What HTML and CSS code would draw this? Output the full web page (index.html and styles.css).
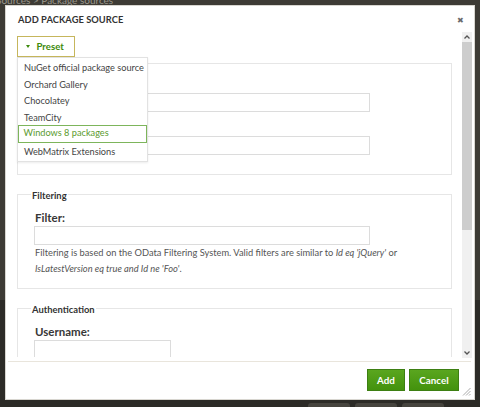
FILE: index.html
```html
<!DOCTYPE html>
<html>
<head>
<meta charset="utf-8">
<link rel="stylesheet" href="styles.css">
</head>
<body>
<div class="backdrop">
  <div class="crumb">Sources &gt; Package sources</div>
  <div class="tabs"><span class="tab"></span><span class="tab"></span><span class="tab"></span></div>
</div>

<div class="dialog">
  <div class="header">
    <span class="title">ADD PACKAGE SOURCE</span>
    <span class="close">&#10006;</span>
  </div>

  <div class="scroller">
    <div class="content">
      <div class="preset-wrap">
        <button class="preset"><span class="caret"></span>Preset</button>
        <ul class="menu">
          <li>NuGet official package source</li>
          <li>Orchard Gallery</li>
          <li>Chocolatey</li>
          <li>TeamCity</li>
          <li class="active">Windows 8 packages</li>
          <li>WebMatrix Extensions</li>
        </ul>
      </div>

      <fieldset class="fs fs-source">
        <legend>Source</legend>
        <label class="lbl">Name:</label>
        <input class="inp wide" type="text">
        <label class="lbl gap">Source:</label>
        <input class="inp wide" type="text">
      </fieldset>

      <fieldset class="fs fs-filter">
        <legend>Filtering</legend>
        <label class="lbl">Filter:</label>
        <input class="inp wide" type="text">
        <p class="help">Filtering is based on the OData Filtering System. Valid filters are similar to <i>Id eq 'jQuery'</i> or<br><i>IsLatestVersion eq true and Id ne 'Foo'</i>.</p>
      </fieldset>

      <fieldset class="fs fs-auth">
        <legend>Authentication</legend>
        <label class="lbl">Username:</label>
        <input class="inp narrow tall" type="text">
      </fieldset>
    </div>
    <div class="scrollbar">
      <div class="sb-btn"><svg width="6" height="4" viewBox="0 0 6 4"><path d="M0.5 3.5 L3 1 L5.5 3.5" fill="none" stroke="#555" stroke-width="1.3"/></svg></div>
      <div class="sb-thumb"></div>
      <div class="sb-track"></div>
      <div class="sb-btn"><svg width="6" height="4" viewBox="0 0 6 4"><path d="M0.5 0.5 L3 3 L5.5 0.5" fill="none" stroke="#555" stroke-width="1.3"/></svg></div>
    </div>
  </div>

  <div class="footer">
    <button class="btn add">Add</button>
    <button class="btn cancel">Cancel</button>
  </div>
  <svg class="grip" width="9" height="9" viewBox="0 0 9 9">
    <path d="M8.5 1 L1 8.5 M8.5 4 L4 8.5 M8.5 7 L7 8.5" stroke="#aaa" stroke-width="1"/>
  </svg>
</div>
</body>
</html>
```

FILE: styles.css
```css
* { box-sizing: border-box; }
html, body { margin: 0; padding: 0; }
body {
  width: 480px;
  height: 407px;
  overflow: hidden;
  background: #3b3933;
  font-family: Lato, "Open Sans", sans-serif;
  position: relative;
}
.backdrop {
  position: absolute;
  inset: 0;
  background: linear-gradient(to bottom, #3d3b35 0, #3d3b35 300px, #2c2b27 300px);
}
.crumb {
  position: absolute;
  left: -4px;
  top: -6px;
  font-size: 10px;
  color: #9a978c;
}
.tabs {
  position: absolute;
  left: 308px;
  top: 403px;
  display: flex;
  gap: 5px;
}
.tab {
  width: 42px;
  height: 8px;
  background: #46443e;
  border-radius: 3px 3px 0 0;
}
.dialog {
  position: absolute;
  left: 5px;
  top: 5px;
  width: 470px;
  height: 395px;
  background: #fff;
  border: 1px solid #d8d6d0;
  display: flex;
  flex-direction: column;
}
.header {
  height: 27px;
  flex: none;
  display: flex;
  align-items: center;
  justify-content: space-between;
  padding: 0 10px 0 12px;
}
.title {
  font-weight: 700;
  font-size: 9.3px;
  color: #333;
  letter-spacing: 0.05px;
}
.close {
  font-size: 8px;
  color: #6a6a6a;
  line-height: 1;
}
.scroller {
  display: flex;
  height: 324px;
  flex: none;
  padding-right: 2px;
}
.content {
  flex: 1;
  overflow: hidden;
  padding: 3px 10px 0 11px;
  position: relative;
}
.preset-wrap {
  position: relative;
  height: 21px;
}
.preset {
  height: 21px;
  width: 58px;
  border: 1px solid #c6b65c;
  background: #fff;
  color: #3d8a0c;
  font-family: inherit;
  font-weight: 700;
  font-size: 9.6px;
  padding: 0 0 0 7.5px;
  display: flex;
  align-items: center;
  gap: 7px;
}
.caret {
  width: 0;
  height: 0;
  border-left: 2.5px solid transparent;
  border-right: 2.5px solid transparent;
  border-top: 3.5px solid #3d8a0c;
}
.menu {
  position: absolute;
  left: 0;
  top: 21px;
  width: 131px;
  margin: 0;
  padding: 1px 0 2px;
  list-style: none;
  background: #fff;
  border: 1px solid #e2e2e2;
  box-shadow: 0 1px 2px rgba(0,0,0,0.08);
  z-index: 5;
}
.menu li {
  height: 16.5px;
  line-height: 15px;
  font-size: 9.2px;
  color: #444;
  padding-left: 5px;
  white-space: nowrap;
  border: 1px solid transparent;
}
.menu li.active {
  border: 1.5px solid #7db55b;
  color: #5a9a2e;
  height: 17.5px;
  line-height: 14.5px;
  padding-left: 4.5px;
}
.fs {
  margin: -2px 0 0;
  border: 1px solid #e6e6e6;
  padding: 6px 16px 19px;
  min-width: 0;
}
.fs legend {
  font-size: 9.4px;
  font-weight: 700;
  color: #333;
  line-height: 12px;
  padding: 4px 1px 0;
  margin-left: -3px;
}
.fs-filter { margin-top: 11px; padding: 8px 16px 11px; }
.fs-auth { margin-top: 11px; padding: 8px 16px 20px; }
.lbl {
  display: block;
  font-size: 11.5px;
  font-weight: 700;
  color: #383838;
  line-height: 16px;
  padding-left: 1px;
}
.lbl.gap { margin-top: 8px; }
.inp {
  display: block;
  height: 19px;
  border: 1px solid #dcdcdc;
  margin: 0;
  padding: 0;
  background: #fff;
}
.inp.wide { width: 336px; }
.inp.narrow { width: 137px; }
.inp.tall { height: 30px; }
.help {
  margin: 0;
  font-size: 9.3px;
  line-height: 16px;
  color: #555;
  padding-left: 1px;
  white-space: nowrap;
}
.scrollbar {
  width: 10px;
  flex: none;
  display: flex;
  flex-direction: column;
  background: #f0f0f0;
  margin-top: -1px;
  margin-bottom: -1px;
}
.sb-btn {
  height: 10px;
  display: flex;
  align-items: center;
  justify-content: center;
  flex: none;
}
.sb-thumb {
  height: 188px;
  background: #cdcdcd;
  flex: none;
}
.sb-track { flex: 1; }
.footer {
  flex: 1;
  margin: 4px 3px 0 2px;
  border-top: 1px solid #e9e5dc;
  display: flex;
  justify-content: flex-end;
  align-items: flex-start;
  gap: 4px;
  padding: 7px 12px 0 0;
}
.btn {
  height: 22px;
  border: 1px solid #3d7f12;
  background: linear-gradient(to bottom, #5aa61f, #43920d);
  color: #fff;
  font-family: inherit;
  font-weight: 700;
  font-size: 9.8px;
  padding: 0;
  text-align: center;
}
.btn.add { width: 38px; }
.btn.cancel { width: 50px; }
.grip {
  position: absolute;
  right: 3px;
  bottom: 3px;
}
```
